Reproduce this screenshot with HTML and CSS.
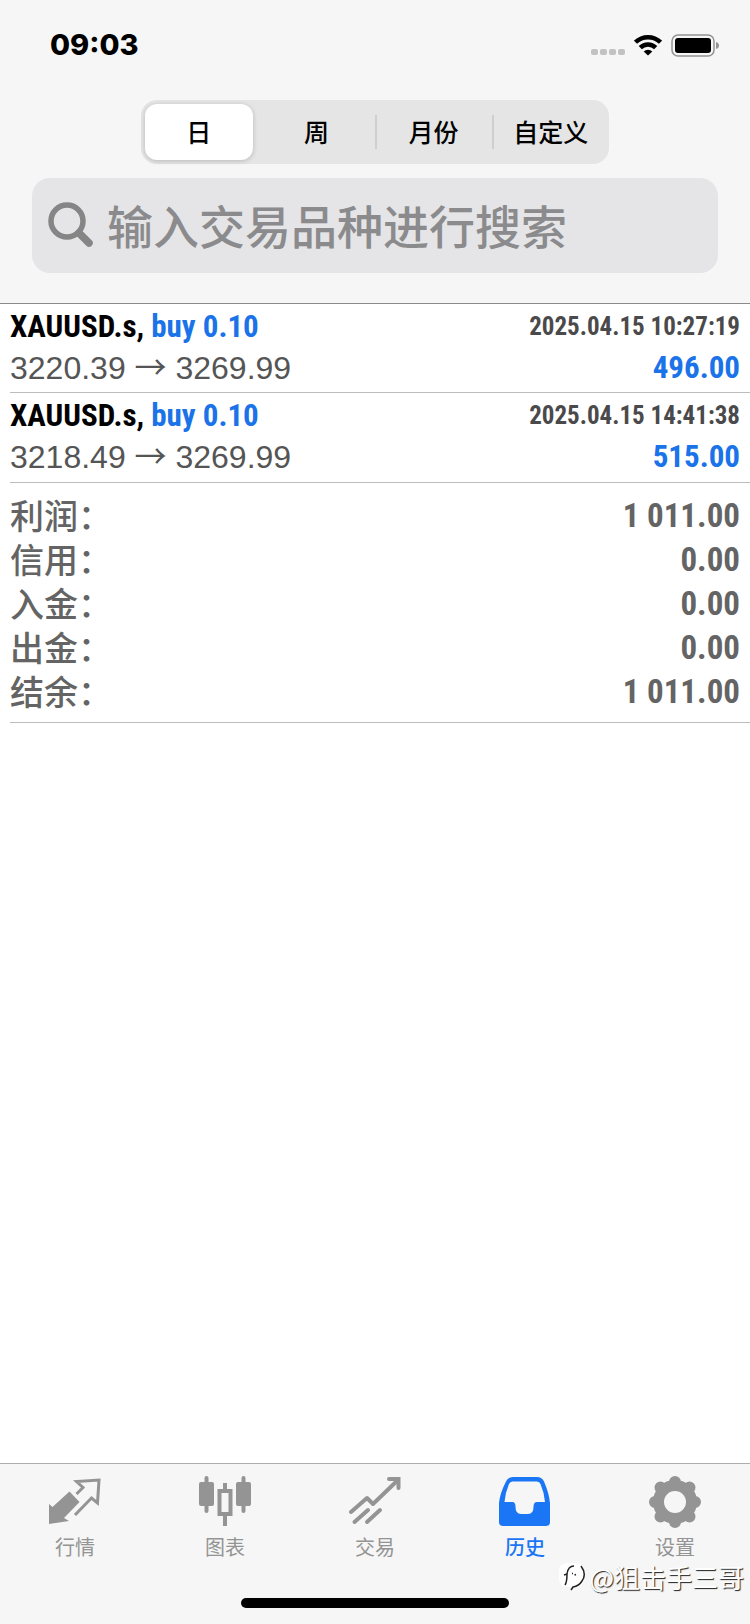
FILE: index.html
```
<!DOCTYPE html>
<html lang="zh-CN">
<head>
<meta charset="utf-8">
<meta name="viewport" content="width=device-width, initial-scale=1">
<title>历史</title>
<link rel="stylesheet" href="styles.css">
</head>
<body>
<div class="app">
  <header class="header">
    <div class="status">
      <time class="clock">09:03</time>
      <div class="status-icons">
        <svg class="signal" viewBox="0 0 34 6" aria-hidden="true"><g fill="#c2c2c2"><rect width="7" height="6" rx="2"/><rect x="9" width="7" height="6" rx="2"/><rect x="18" width="7" height="6" rx="2"/><rect x="27" width="7" height="6" rx="2"/></g></svg>
        <svg class="wifi" viewBox="0 0 28 22" aria-hidden="true"><g fill="none" stroke="#000" stroke-width="4.500"><path d="M1.500 8.200A18 18 0 0 1 26.500 8.200"/><path d="M6.300 13.700A11 11 0 0 1 21.700 13.700"/></g><path d="M14 21.500L9.700 17.600A6.200 6.200 0 0 1 18.300 17.600Z"/></svg>
        <svg class="battery" viewBox="0 0 48 23" aria-hidden="true"><rect x="1" y="1" width="42" height="21" rx="6" fill="none" stroke="#939393" stroke-width="1.500"/><rect x="4" y="4" width="36" height="15" rx="3"/><path d="M45 8Q48 9 48 11.500Q48 14 45 15Z" fill="#939393"/></svg>
      </div>
    </div>
    <nav class="segments">
      <button class="segment selected" type="button">日</button>
      <button class="segment" type="button">周</button>
      <button class="segment divided" type="button">月份</button>
      <button class="segment divided" type="button">自定义</button>
    </nav>
    <label class="search">
      <svg class="search-icon" viewBox="0 0 46 46" aria-hidden="true"><g fill="none" stroke="#858585"><circle cx="19" cy="20" r="16" stroke-width="5.500"/><path d="M31 32L41 42" stroke-width="7.500" stroke-linecap="round"/></g></svg>
      <input class="search-input" type="search" placeholder="输入交易品种进行搜索" aria-label="输入交易品种进行搜索">
    </label>
  </header>
  <main class="content">
    <ul class="deals">
      <li class="deal">
        <div class="line"><span class="symbol">XAUUSD.s, <span class="side">buy 0.10</span></span><time class="date">2025.04.15 10:27:19</time></div>
        <div class="line"><span class="prices">3220.39 <span class="arrow">→</span> 3269.99</span><span class="profit">496.00</span></div>
      </li>
      <li class="deal">
        <div class="line"><span class="symbol">XAUUSD.s, <span class="side">buy 0.10</span></span><time class="date">2025.04.15 14:41:38</time></div>
        <div class="line"><span class="prices">3218.49 <span class="arrow">→</span> 3269.99</span><span class="profit">515.00</span></div>
      </li>
    </ul>
    <dl class="summary">
      <div class="total"><dt>利润：</dt><dd>1 011.00</dd></div>
      <div class="total"><dt>信用：</dt><dd>0.00</dd></div>
      <div class="total"><dt>入金：</dt><dd>0.00</dd></div>
      <div class="total"><dt>出金：</dt><dd>0.00</dd></div>
      <div class="total"><dt>结余：</dt><dd>1 011.00</dd></div>
    </dl>
  </main>
  <footer class="footer">
    <nav class="tabs">
      <a class="tab" href="#quotes"><svg class="tab-icon" viewBox="0 0 52 52" aria-hidden="true"><path d="M0 28L3.500 31L20.500 15.500L30.500 26L15 42L20 45L0 48Z" fill="currentColor"/><path d="M27.500 18L34 11.500L27.500 5.500L50 4L48.500 27L42.500 22L26 39" fill="none" stroke="currentColor" stroke-width="3"/></svg>行情</a>
      <a class="tab" href="#chart"><svg class="tab-icon" viewBox="0 0 52 52" aria-hidden="true"><g fill="currentColor"><rect x="0" y="6" width="15" height="24" rx="2"/><rect x="5.500" y="0" width="4" height="37" rx="2"/><rect x="37" y="6" width="15" height="24" rx="2"/><rect x="42.500" y="0" width="4" height="37" rx="2"/><rect x="24" y="7" width="4" height="7"/><rect x="24" y="40" width="4" height="10"/></g><rect x="20.500" y="15" width="11" height="23" fill="none" stroke="currentColor" stroke-width="4"/></svg>图表</a>
      <a class="tab" href="#trade"><svg class="tab-icon" viewBox="0 0 52 52" aria-hidden="true"><g fill="none" stroke="currentColor" stroke-width="4" stroke-linecap="round" stroke-linejoin="round"><path d="M2 36L18 22L24 28L49 4"/><path d="M40 3H49.500V12" stroke-linejoin="miter"/><path d="M5.500 46L19 34M18 46L31 34"/></g></svg>交易</a>
      <a class="tab active" href="#history" aria-current="page"><svg class="tab-icon" viewBox="0 0 52 52" aria-hidden="true"><path fill="currentColor" fill-rule="evenodd" d="M14 1H38Q43 1 45 5.500Q50 17 51 27V46Q51 50 47 50H4Q0 50 0 46V27Q1 17 7 5.500Q9 1 14 1ZM13.500 5.500Q11 5.500 10 8Q6.500 16 5.500 26H13.500Q16.500 26 16.500 31Q16.500 38 22 38H29Q34.500 38 34.500 31Q34.500 26 38 26H46Q45 16 41.500 8Q40.500 5.500 38 5.500Z"/></svg>历史</a>
      <a class="tab" href="#settings"><svg class="tab-icon" viewBox="0 0 52 52" aria-hidden="true"><g fill="none" stroke="currentColor"><circle cx="26" cy="26" r="16.500" stroke-width="11"/><g stroke-width="12" stroke-linecap="round"><path d="M26 6V6.500M26 45.500V46M6 26H6.500M45.500 26H46M11.500 11.500L12 12M40 40L40.500 40.500M40.500 11.500L40 12M12 40L11.500 40.500"/></g></g></svg>设置</a>
    </nav>
    <div class="home-bar"></div>
    <div class="watermark">
      <svg class="watermark-logo" viewBox="0 0 28 30" aria-hidden="true"><rect x="0" y="1" width="25" height="24" rx="8" fill="#fff"/><path d="M5 13L8 12Q9 4 15 4M8 12Q8 20 6 23M13 11.500H14M15.500 13L17 12.500M22 4Q28 12 23 19Q20 24 14 25L12 28" fill="none" stroke="#222" stroke-width="1.500"/></svg>
      <span>@狙击手三哥</span>
    </div>
  </footer>
</div>
</body>
</html>
```
FILE: styles.css
```
* { box-sizing: border-box; }
body, ul, dl, dd { margin: 0; padding: 0; }
body {
  background: #fff;
  color: #000;
  font-family: "Liberation Sans", "Noto Sans CJK SC", sans-serif;
}
.app { display: flex; flex-direction: column; min-height: 100vh; }
.header {
  display: flex;
  flex-direction: column;
  align-items: center;
  padding-bottom: 30px;
  background: #f6f6f6;
  border-bottom: 1px solid #8a8a8a;
}
.status {
  display: flex;
  justify-content: space-between;
  align-items: center;
  width: 100%;
  height: 100px;
  padding: 0 31px 10px 50px;
}
.clock { font: 800 29px/40px Inter, sans-serif; }
.status-icons { display: flex; align-items: center; gap: 9px; }
.signal { width: 34px; height: 6px; margin-top: 14px; }
.wifi { width: 28px; height: 22px; }
.battery { width: 48px; height: 23px; }
.segments {
  display: grid;
  grid-template-columns: repeat(4, 1fr);
  width: 62.5%;
  height: 64px;
  margin-bottom: 14px;
  border-radius: 16px;
  background: #e5e5e5;
}
.segment {
  position: relative;
  border: 0;
  padding: 0 0 2px;
  background: none;
  color: #000;
  font: 500 25px/36px "Noto Sans CJK SC", sans-serif;
}
.selected {
  margin: 4px 5px 4px 4px;
  border-radius: 12px;
  background: #fff;
  box-shadow: 0 1px 5px rgba(0, 0, 0, 0.2);
}
.divided::before {
  content: "";
  position: absolute;
  left: 0;
  top: 15px;
  bottom: 15px;
  width: 2px;
  background: #cfcfcf;
}
.search {
  display: flex;
  align-items: center;
  gap: 13px;
  align-self: stretch;
  height: 95px;
  margin: 0 32px;
  padding: 0 16px 4px;
  border-radius: 18px;
  background: #e5e5e7;
}
.search-icon { flex: none; width: 46px; height: 46px; }
.search-input {
  flex: 1;
  min-width: 0;
  height: 72px;
  padding: 0;
  border: 0;
  outline: 0;
  background: none;
  font: 500 46px/70px "Noto Sans CJK SC", sans-serif;
}
.search-input::placeholder { color: #8b8b8d; opacity: 1; }
.content { flex: 1; padding-left: 10px; }
.deals { list-style: none; }
.deal {
  height: 90px;
  padding: 2px 10px 0 0;
  border-bottom: 1px solid #bdbdbd;
}
.deal:first-child { height: 89px; }
.line {
  display: flex;
  justify-content: space-between;
  align-items: center;
  height: 41px;
  line-height: 40px;
  white-space: nowrap;
}
.symbol, .date, .profit, .total dd {
  font-family: "Liberation Sans Narrow", "Roboto Condensed", "Liberation Sans", sans-serif;
  font-weight: 700;
}
.symbol { font-size: 31px; }
.side, .profit { color: #1a73e8; }
.date { font-size: 25px; color: #4a4a4c; }
.prices { font-size: 32px; color: #555; }
.arrow { font-family: "Noto Sans CJK SC", sans-serif; line-height: 1; }
.profit { font-size: 31px; }
.summary {
  padding: 10px 10px 9px 0;
  border-bottom: 1px solid #bdbdbd;
  color: #646464;
}
.total {
  display: flex;
  justify-content: space-between;
  align-items: center;
  height: 44px;
}
.total dt { font: 500 34px/44px "Noto Sans CJK SC", sans-serif; }
.total dd { padding-top: 2px; font-size: 33px; line-height: 44px; }
.footer {
  position: relative;
  display: flex;
  flex-direction: column;
  align-items: center;
  border-top: 1px solid #adadad;
  background: #f6f6f6;
}
.tabs { display: grid; grid-template-columns: repeat(5, 1fr); width: 100%; height: 134px; padding-top: 12px; }
.tab {
  display: flex;
  flex-direction: column;
  align-items: center;
  gap: 4px;
  color: #949494;
  font: 400 20px/30px "Noto Sans CJK SC", sans-serif;
  text-decoration: none;
}
.tab-icon { width: 52px; height: 52px; }
.active { color: #1a76f5; font-weight: 500; }
.home-bar { width: 268px; height: 10px; margin-bottom: 16px; border-radius: 5px; background: #000; }
.watermark {
  position: absolute;
  right: 6px;
  bottom: 28px;
  display: flex;
  align-items: center;
  gap: 2px;
  color: #fff;
  font: 400 26px/38px "Noto Sans CJK SC", sans-serif;
  text-shadow: 1px 1px 1px #222;
}
.watermark-logo { width: 28px; height: 30px; }
```
